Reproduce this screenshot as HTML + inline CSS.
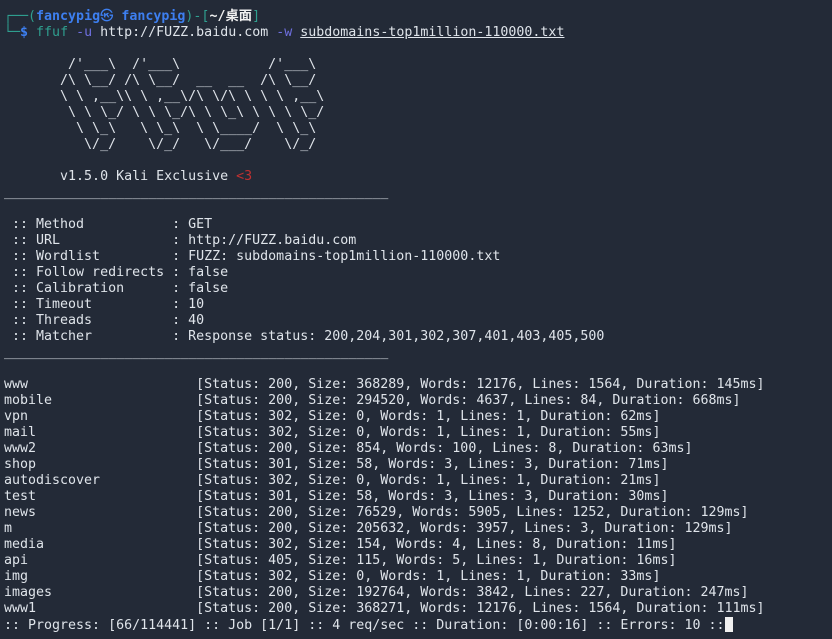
<!DOCTYPE html>
<html><head><meta charset="utf-8"><style>
html,body{margin:0;padding:0;background:#232a37;width:832px;height:639px;overflow:hidden}
pre{margin:0;position:absolute;left:4px;top:9px;font-family:"DejaVu Sans Mono","Liberation Mono","Noto Sans CJK SC",monospace;font-size:13.3px;line-height:16px;color:#dfe4ea;white-space:pre}
.g{color:#2f9f8f}.b{color:#3d7ff0;font-weight:bold}.w{font-weight:bold;color:#f0f0f0}.m{color:#6f6fe0}.r{color:#c03030}.u{text-decoration:underline}
.cur{display:inline-block;width:8px;height:15px;background:#f0f0f0;vertical-align:-3px}
</style></head><body>
<pre><span class="g">┌──(</span><span class="b">fancypig㉿ fancypig</span><span class="g">)-[</span><span class="w">~/桌面</span><span class="g">]</span>
<span class="g">└─</span><span class="b">$</span> <span class="g">ffuf</span> <span class="m">-u</span> http://FUZZ.baidu.com <span class="m">-w</span> <span class="u">subdomains-top1million-110000.txt</span>

        /'___\  /'___\           /'___\
       /\ \__/ /\ \__/  __  __  /\ \__/
       \ \ ,__\\ \ ,__\/\ \/\ \ \ \ ,__\
        \ \ \_/ \ \ \_/\ \ \_\ \ \ \ \_/
         \ \_\   \ \_\  \ \____/  \ \_\
          \/_/    \/_/   \/___/    \/_/

       v1.5.0 Kali Exclusive <span class="r">&lt;3</span>
________________________________________________

 :: Method           : GET
 :: URL              : http://FUZZ.baidu.com
 :: Wordlist         : FUZZ: subdomains-top1million-110000.txt
 :: Follow redirects : false
 :: Calibration      : false
 :: Timeout          : 10
 :: Threads          : 40
 :: Matcher          : Response status: 200,204,301,302,307,401,403,405,500
________________________________________________

www                     [Status: 200, Size: 368289, Words: 12176, Lines: 1564, Duration: 145ms]
mobile                  [Status: 200, Size: 294520, Words: 4637, Lines: 84, Duration: 668ms]
vpn                     [Status: 302, Size: 0, Words: 1, Lines: 1, Duration: 62ms]
mail                    [Status: 302, Size: 0, Words: 1, Lines: 1, Duration: 55ms]
www2                    [Status: 200, Size: 854, Words: 100, Lines: 8, Duration: 63ms]
shop                    [Status: 301, Size: 58, Words: 3, Lines: 3, Duration: 71ms]
autodiscover            [Status: 302, Size: 0, Words: 1, Lines: 1, Duration: 21ms]
test                    [Status: 301, Size: 58, Words: 3, Lines: 3, Duration: 30ms]
news                    [Status: 200, Size: 76529, Words: 5905, Lines: 1252, Duration: 129ms]
m                       [Status: 200, Size: 205632, Words: 3957, Lines: 3, Duration: 129ms]
media                   [Status: 302, Size: 154, Words: 4, Lines: 8, Duration: 11ms]
api                     [Status: 405, Size: 115, Words: 5, Lines: 1, Duration: 16ms]
img                     [Status: 302, Size: 0, Words: 1, Lines: 1, Duration: 33ms]
images                  [Status: 200, Size: 192764, Words: 3842, Lines: 227, Duration: 247ms]
www1                    [Status: 200, Size: 368271, Words: 12176, Lines: 1564, Duration: 111ms]
:: Progress: [66/114441] :: Job [1/1] :: 4 req/sec :: Duration: [0:00:16] :: Errors: 10 ::<span class="cur"></span></pre>
</body></html>
